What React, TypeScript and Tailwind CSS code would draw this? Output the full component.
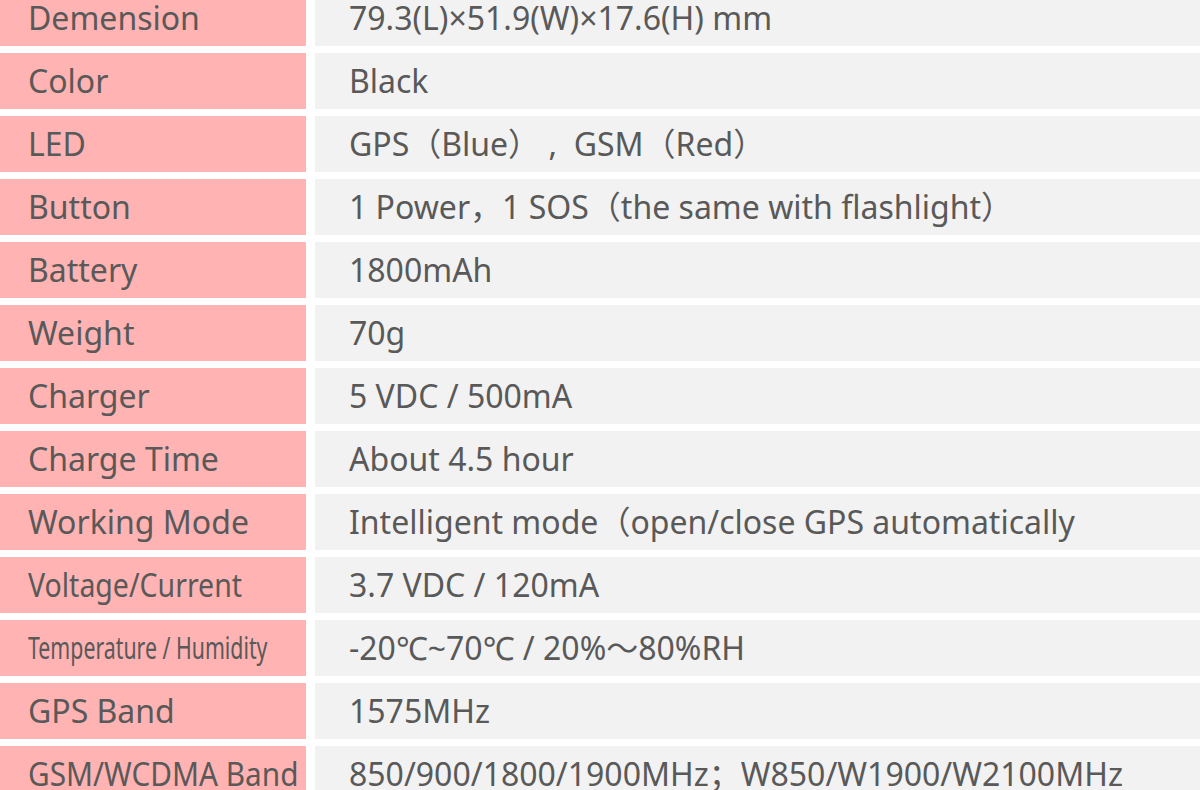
const rows: { label: string; value: string; labelClass?: string }[] = [
  { label: 'Demension', value: '79.3(L)×51.9(W)×17.6(H) mm' },
  { label: 'Color', value: 'Black' },
  { label: 'LED', value: 'GPS（Blue） ,  GSM（Red）' },
  { label: 'Button', value: '1 Power，1 SOS（the same with flashlight）' },
  { label: 'Battery', value: '1800mAh' },
  { label: 'Weight', value: '70g' },
  { label: 'Charger', value: '5 VDC / 500mA' },
  { label: 'Charge Time', value: 'About 4.5 hour' },
  { label: 'Working Mode', value: 'Intelligent mode（open/close GPS automatically' },
  { label: 'Voltage/Current', value: '3.7 VDC / 120mA', labelClass: 'scale-x-[0.89]' },
  { label: 'Temperature / Humidity', value: '-20℃~70℃ / 20%～80%RH', labelClass: 'text-[30px] scale-x-[0.71]' },
  { label: 'GPS Band', value: '1575MHz' },
  { label: 'GSM/WCDMA Band', value: '850/900/1800/1900MHz；W850/W1900/W2100MHz', labelClass: 'scale-x-[0.93]' },
]

export default function App() {
  return (
    <div
      className="h-[790px] w-[1200px] overflow-hidden bg-white text-[#595959]"
      style={{ fontFamily: '"Noto Sans", "Noto Sans CJK SC", sans-serif' }}
    >
      <div className="-mt-[10px] flex flex-col gap-[7px]">
        {rows.map((r) => (
          <div key={r.label} className="flex h-[56px] gap-[9px]">
            <div className="flex w-[306px] shrink-0 items-center bg-[#ffb3b3] pl-[28px] text-[32px] leading-none whitespace-nowrap">
              <span className={'inline-block origin-left ' + (r.labelClass ?? '')}>{r.label}</span>
            </div>
            <div className="flex flex-1 items-center bg-[#f2f2f2] pl-[34px] text-[32px] leading-none whitespace-pre">
              {r.value}
            </div>
          </div>
        ))}
      </div>
    </div>
  )
}
